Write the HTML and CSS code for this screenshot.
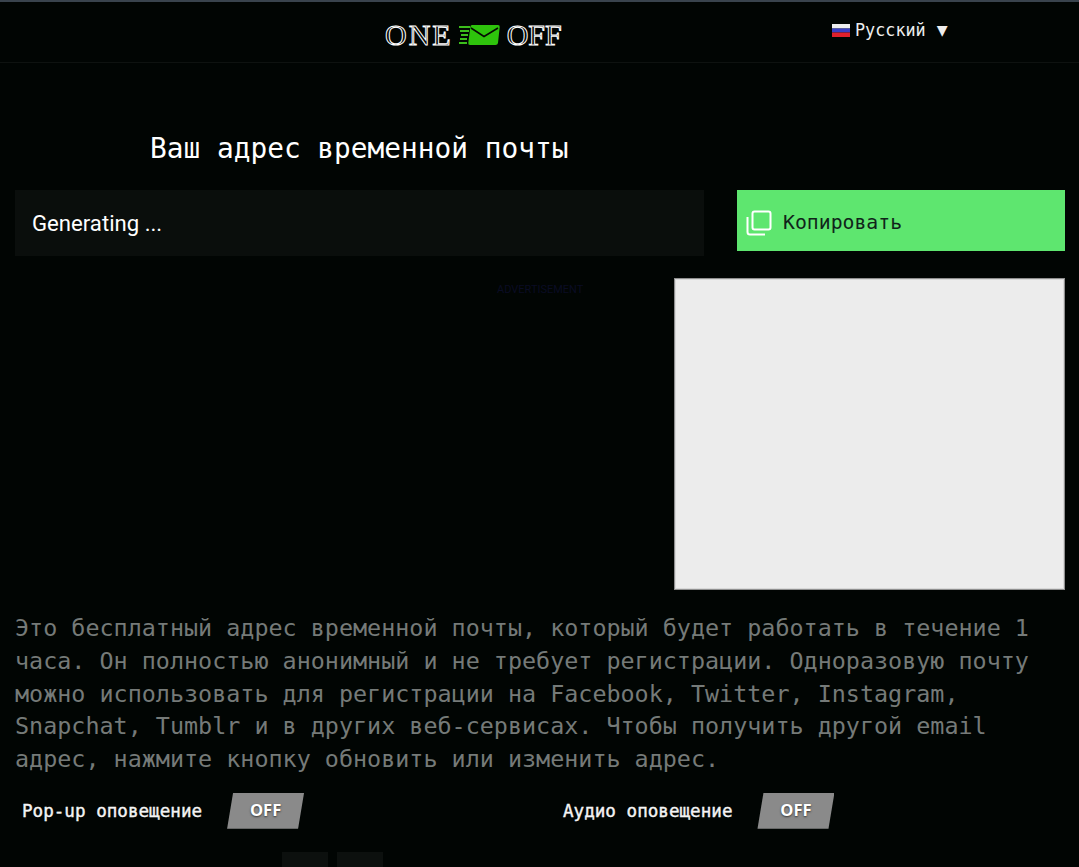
FILE: index.html
```html
<!DOCTYPE html>
<html lang="ru">
<head>
    <meta charset="UTF-8">
    <title>One Off</title>
    <link rel="stylesheet" href="styles.css">
</head>
<body>
    <header class="top-bar">
        <div class="logo">
            <span class="logo-word logo-one">ONE</span>
            <svg class="logo-icon" width="41" height="20" viewBox="0 0 41 20">
                <path d="M0 2h11M1 6h9M2 10h7M1 14h7M0 18h8" stroke="#3cbd1c" stroke-width="2"/>
                <path d="M13 0h26q2 0 1.700 2L39 18q-.3 2-2.500 2H11q-2 0-1.700-2l2-16Q11.600 0 13 0z" fill="#2ec30c"/>
                <path d="M12 3l13 8.500 14-8.500" fill="none" stroke="#050a03" stroke-width="1.500"/>
            </svg>
            <span class="logo-word">OFF</span>
        </div>
        <div class="lang">
            <svg class="flag" width="18" height="13" viewBox="0 0 18 13">
                <rect width="18" height="4.500" fill="#eee"/>
                <rect y="4.500" width="18" height="4" fill="#3a3fc4"/>
                <rect y="8.500" width="18" height="4.500" fill="#e0202c"/>
            </svg>
            <span>Русский</span>
            <span class="caret">▼</span>
        </div>
    </header>

    <h1 class="title">Ваш адрес временной почты</h1>

    <div class="address-row">
        <div class="address-box">Generating ...</div>
        <button class="copy-button">
            <svg width="26" height="26" viewBox="0 0 26 26" fill="none" stroke="#fff" stroke-width="2">
                <rect x="6.500" y="1.500" width="18" height="18" rx="2"/>
                <path d="M1.500 7v15q0 2.500 2.500 2.500h15"/>
            </svg>
            <span>Копировать</span>
        </button>
    </div>

    <div class="ad-row">
        <div class="ad-label">ADVERTISEMENT</div>
        <div class="ad-box"></div>
    </div>

    <p class="description">Это бесплатный адрес временной почты, который будет работать в течение 1 часа. Он полностью анонимный и не требует регистрации. Одноразовую почту можно использовать для регистрации на Facebook, Twitter, Instagram, Snapchat, Tumblr и в других веб-сервисах. Чтобы получить другой email адрес, нажмите кнопку обновить или изменить адрес.</p>

    <div class="alerts">
        <div class="alert alert-popup">
            <span class="alert-name">Pop-up оповещение</span>
            <span class="toggle">OFF</span>
        </div>
        <div class="alert">
            <span class="alert-name">Аудио оповещение</span>
            <span class="toggle">OFF</span>
        </div>
    </div>

    <div class="pager">
        <div class="pager-item"></div>
        <div class="pager-item"></div>
    </div>
</body>
</html>
```

FILE: styles.css
```css
body {
    margin: 0;
    height: 867px;
    overflow: hidden;
    background-color: #010503;
    font-family: "DejaVu Sans Mono", monospace;
    color: #fff;
}
.top-bar {
    height: 60px;
    border-top: 2px solid #39434d;
    border-bottom: 1px solid #0e1210;
    display: flex;
    position: relative;
}
.logo {
    margin-left: 385px;
    margin-top: 16px;
    width: 178px;
    height: 34px;
    display: flex;
    align-items: center;
    gap: 7px;
}
.logo-word {
    font-family: "Liberation Serif", serif;
    font-size: 30px;
    line-height: 34px;
    color: #010503;
    -webkit-text-stroke: 1px #fff;
}
.logo-one {
    letter-spacing: 2px;
    margin-right: -2px;
}
.logo-icon {
    flex-shrink: 0;
    margin-left: 1px;
}
.lang {
    position: absolute;
    left: 832px;
    top: 18px;
    display: flex;
    align-items: center;
    font-size: 16.800px;
    color: #eee;
}
.flag {
    margin-right: 5px;
}
.caret {
    margin-left: 11px;
    font-size: 18px;
    line-height: 20px;
}
.title {
    margin: 68px 0 0 150px;
    font-size: 27.800px;
    font-weight: normal;
    line-height: 35px;
}
.address-row {
    display: flex;
    margin: 24px 14px 0 15px;
    align-items: flex-start;
}
.address-box {
    width: 672px;
    height: 66px;
    padding-left: 17px;
    background-color: #0a0e0c;
    font-family: Roboto, sans-serif;
    font-size: 22.150px;
    line-height: 66px;
}
.copy-button {
    margin-left: 33px;
    width: 328px;
    height: 61px;
    padding: 4px 0 0 9px;
    border: none;
    background-color: #5ee66f;
    display: flex;
    align-items: center;
    gap: 11px;
    font-family: "DejaVu Sans Mono", monospace;
    font-size: 19.800px;
    color: #10241a;
}
.ad-row {
    display: flex;
    margin: 22px 14px 0 0;
    justify-content: flex-end;
    position: relative;
}
.ad-label {
    position: absolute;
    left: 497px;
    top: 5px;
    font-family: Roboto, sans-serif;
    font-size: 11px;
    line-height: 14px;
    color: #0a0c24;
}
.ad-box {
    width: 389px;
    height: 310px;
    background-color: #ececec;
    border: 1px solid #8f8f8f;
    box-shadow: inset 0 0 0 1px #d8d8d8;
}
.description {
    margin: 22px 30px 0 15px;
    font-size: 23.400px;
    line-height: 32.750px;
    color: #757a78;
}
.alerts {
    display: flex;
    margin-top: 17px;
    padding-left: 22px;
}
.alert {
    display: flex;
    align-items: center;
    gap: 25px;
}
.alert-popup {
    width: 541px;
}
.alert-name {
    font-size: 17.600px;
    color: #f4f4f4;
    -webkit-text-stroke: 0.4px #f4f4f4;
}
.toggle {
    width: 77px;
    height: 36px;
    background-color: #8a8a8a;
    clip-path: polygon(6px 0, 100% 0, 71px 100%, 0 100%);
    font-family: "Open Sans", sans-serif;
    font-size: 16.500px;
    font-weight: bold;
    line-height: 33px;
    text-align: center;
    text-shadow: 0 1px 2px #333;
}
.pager {
    display: flex;
    gap: 9px;
    margin: 23px 0 0 282px;
}
.pager-item {
    width: 46px;
    height: 40px;
    background-color: #0c100e;
}
```
